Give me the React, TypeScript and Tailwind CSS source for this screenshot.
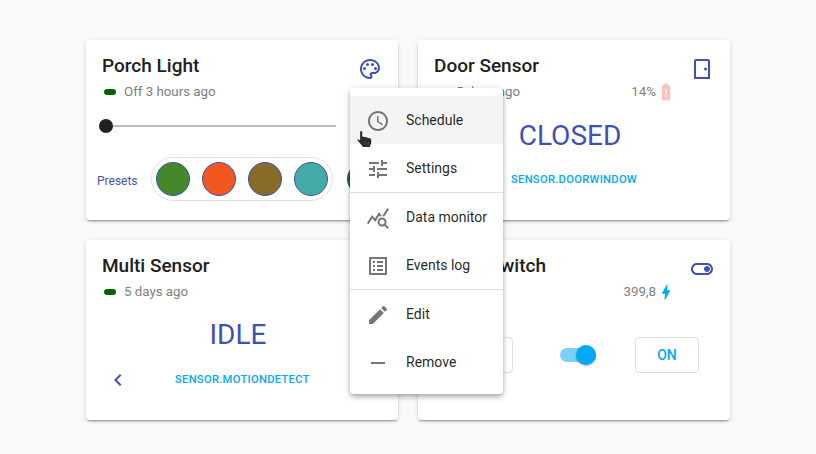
import type { ReactNode } from "react";
import {
  MdBatteryAlert,
  MdBolt,
  MdChevronLeft,
  MdEdit,
  MdOutlineListAlt,
  MdOutlinePalette,
  MdOutlineToggleOn,
  MdQueryStats,
  MdRemove,
  MdSchedule,
  MdTune,
} from "react-icons/md";

function DoorIcon() {
  return (
    <svg viewBox="0 0 24 24" className="size-6" fill="currentColor">
      <path d="M18 4v16H6V4h12m0-2H6c-1.1 0-2 .9-2 2v18h16V4c0-1.1-.9-2-2-2z" />
      <circle cx="15.5" cy="12" r="1.5" />
    </svg>
  );
}

function HandCursor() {
  return (
    <svg viewBox="0 0 18 19" className="absolute left-[6px] top-[42px] h-[19px] w-[18px]" aria-hidden="true">
      <path
        d="M3.6 2.3C3.6 .3 6.8 .3 6.8 2.3V6.2L9.4 6.6 11.8 7.2 14.2 7.9 15.8 9.2V13.2L14.6 15.5V17.5H6V16L3.2 13 1 10.2C.8 8.8 2.4 8.4 3.6 9.8Z"
        fill="#2b2b2b"
        stroke="#fff"
        strokeWidth="1"
        strokeLinejoin="round"
      />
      <path d="M8.5 12v3M10.5 12v3M12.5 12v3" stroke="#555" strokeWidth=".6" />
    </svg>
  );
}

type CardProps = {
  title: string;
  icon: ReactNode;
  status?: string;
  reading?: ReactNode;
  children: ReactNode;
};

function Card({ title, icon, status, reading, children }: CardProps) {
  return (
    <section className="flex h-[180px] flex-col overflow-hidden rounded-[4px] bg-white shadow-[0_3px_1px_-2px_rgba(0,0,0,0.2),0_2px_2px_0_rgba(0,0,0,0.14),0_1px_5px_0_rgba(0,0,0,0.12)]">
      <header className="flex h-[60px] shrink-0 justify-between px-4">
        <div className="flex flex-1 flex-col pt-[14px]">
          <h2 className="h-6 whitespace-nowrap text-[19px] font-medium leading-6 text-[#212121]">{title}</h2>
          <div className="mt-1 flex h-5 items-center text-[13.3px] leading-5 text-[#808080]">
            {status && (
              <>
                <span className="ml-[2px] mr-2 h-[6px] w-3 rounded-[3px] bg-[#006400]" />
                <span>{status}</span>
              </>
            )}
            <span className="ml-auto mr-[14px] flex items-center">{reading}</span>
          </div>
        </div>
        <span className="mt-[17px] size-6 text-[#3f51b5]">{icon}</span>
      </header>
      {children}
    </section>
  );
}

function Swatch({ color }: { color: string }) {
  return <span className={`size-[34px] shrink-0 rounded-full border border-[#3f51b5] ${color}`} />;
}

function OutlineButton({ children }: { children: ReactNode }) {
  return (
    <button className="h-9 w-16 rounded-[4px] border border-black/12 text-[14px] font-medium text-[#03a9f4]">
      {children}
    </button>
  );
}

function MenuItem({ icon, label, active }: { icon: ReactNode; label: string; active?: boolean }) {
  return (
    <button
      className={`flex h-12 w-full items-center whitespace-nowrap pl-4 text-left text-[14px] text-black/87 ${
        active ? "bg-[#f4f4f4]" : ""
      }`}
    >
      <span className="mr-4 mt-[2px] size-6 text-[#757575]">{icon}</span>
      {label}
    </button>
  );
}

export default function App() {
  return (
    <main className="relative h-[454px] w-[816px] overflow-hidden bg-[#fafafa] pl-[86px] pt-10 font-[Roboto,sans-serif]">
      <div className="grid w-[644px] grid-cols-2 gap-5">
        <Card title="Porch Light" status="Off 3 hours ago" icon={<MdOutlinePalette size={24} />}>
          <div className="ml-[13px] mt-[19px] flex h-[14px] items-center">
            <span className="size-[14px] rounded-full bg-[#212121]" />
            <span className="h-[2px] w-[223px] bg-[#bdbdbd]" />
          </div>
          <div className="ml-[11px] mt-6 flex h-11 items-center">
            <span className="w-[54px] pt-1 text-[12px] text-[#3f51b5]">Presets</span>
            <div className="flex h-11 w-[182px] shrink-0 items-center gap-3 rounded-full border border-black/12 pl-1">
              <Swatch color="bg-[#43892a]" />
              <Swatch color="bg-[#f05721]" />
              <Swatch color="bg-[#886b27]" />
              <Swatch color="bg-[#43aba5]" />
            </div>
            <span className="ml-[14px]" />
            <Swatch color="bg-[#2e611b]" />
          </div>
        </Card>

        <Card
          title="Door Sensor"
          status="5 days ago"
          icon={<DoorIcon />}
          reading={
            <>
              14%
              <MdBatteryAlert size={20} className="text-[#fbc1bc]" />
            </>
          }
        >
          <div className="mt-[18px] pr-2 text-center text-[28px] leading-9 text-[#3f51b5]">CLOSED</div>
          <div className="mt-[18px] text-center text-[11.2px] font-medium leading-4 tracking-[0.28px] text-[#03a9f4]">
            SENSOR.DOORWINDOW
          </div>
        </Card>

        <Card title="Multi Sensor" status="5 days ago" icon={null}>
          <div className="mt-[17px] pr-2 text-center text-[28px] leading-9 text-[#3f51b5]">IDLE</div>
          <div className="mt-[15px] flex h-6 items-center">
            <MdChevronLeft size={24} className="ml-5 text-[#3f51b5]" />
            <span className="ml-[45px] text-[11.2px] font-medium leading-4 tracking-[0.28px] text-[#03a9f4]">
              SENSOR.MOTIONDETECT
            </span>
          </div>
        </Card>

        <Card
          title="Meter Switch"
          icon={<MdOutlineToggleOn size={24} />}
          reading={
            <>
              399,8
              <MdBolt size={20} className="text-[#03a9f4]" />
            </>
          }
        >
          <div className="ml-[31px] mt-[37px] flex h-9 items-center">
            <OutlineButton>OFF</OutlineButton>
            <span className="ml-[47px] mr-[39px] flex h-[14px] w-9 items-center justify-end rounded-full bg-[#79d1f9]">
              <span className="size-5 shrink-0 rounded-full bg-[#03a9f4] shadow-[0_1px_2px_rgba(0,0,0,0.3)]" />
            </span>
            <OutlineButton>ON</OutlineButton>
          </div>
        </Card>
      </div>

      <nav className="absolute left-[350px] top-[88px] w-[153px] rounded-[4px] bg-white py-2 shadow-[0_2px_4px_-1px_rgba(0,0,0,0.2),0_4px_5px_0_rgba(0,0,0,0.14),0_1px_10px_0_rgba(0,0,0,0.12)]">
        <MenuItem icon={<MdSchedule size={24} />} label="Schedule" active />
        <MenuItem icon={<MdTune size={24} />} label="Settings" />
        <hr className="border-black/12" />
        <MenuItem icon={<MdQueryStats size={24} />} label="Data monitor" />
        <MenuItem icon={<MdOutlineListAlt size={24} />} label="Events log" />
        <hr className="border-black/12" />
        <MenuItem icon={<MdEdit size={24} />} label="Edit" />
        <MenuItem icon={<MdRemove size={24} />} label="Remove" />
        <HandCursor />
      </nav>
    </main>
  );
}
